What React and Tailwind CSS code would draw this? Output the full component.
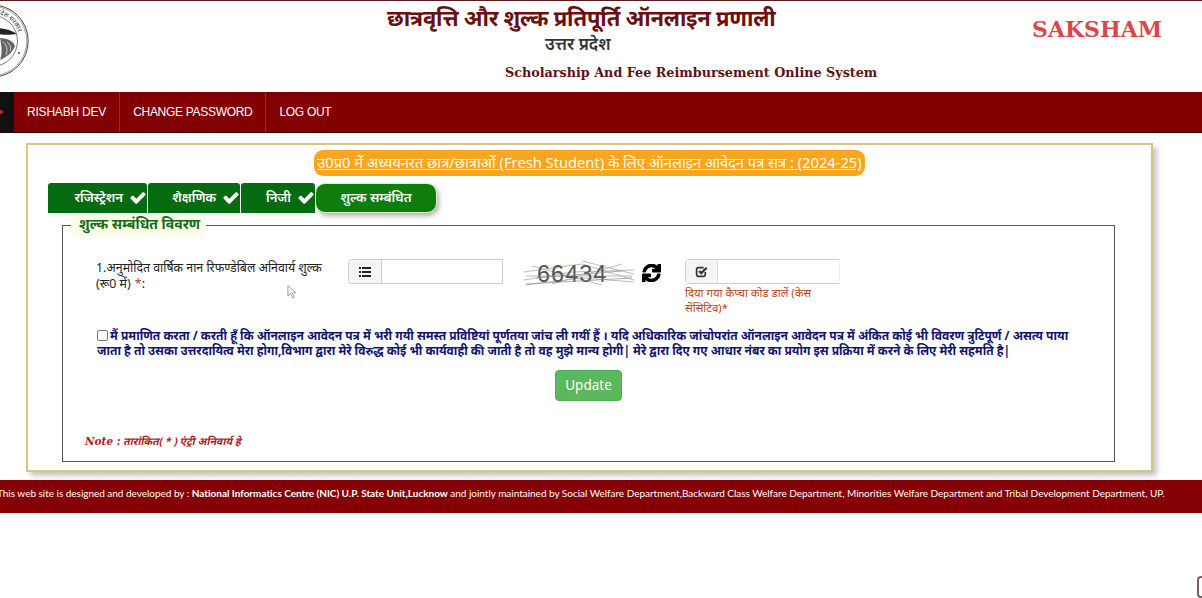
import React from "react";
import { FaCheck, FaSync } from "react-icons/fa";

const deva = "font-['Noto_Sans','Noto_Sans_Devanagari','Lohit_Devanagari','Open_Sans',sans-serif]";

function Seal() {
  return (
    <svg viewBox="0 0 74 74" className="w-[74px] h-[74px] shrink-0 -ml-[45px] mt-[3px]" fill="none">
      <circle cx="37" cy="37" r="36.2" stroke="#333" strokeWidth="0.9" />
      <circle cx="37" cy="37" r="34.8" stroke="#444" strokeWidth="0.5" />
      <circle cx="37" cy="37" r="25.5" stroke="#444" strokeWidth="0.7" />
      <path id="sealArc" d="M37 9.5 A27.5 27.5 0 0 1 64 42" />
      <text fontSize="6.6" fill="#333" fontFamily="'Noto Sans', sans-serif">
        <textPath href="#sealArc" startOffset="4">प्रदेश सरकार</textPath>
      </text>
      <path d="M37 24 C46 24 55 25 62 30 C55 31 50 31 44 30 C40 30 38 29 37 28 Z" fill="#222" />
      <path d="M45 34 C53 34 59 38 60 42 C58 48 52 53 45 56 C47 50 47 42 45 34 Z" fill="#666" />
      <path d="M48 38 C52 41 53 46 51 51 M52 38 C56 41 56 44 55 47" stroke="#eee" strokeWidth="0.8" />
      <circle cx="64" cy="49" r="0.9" fill="#333" />
    </svg>
  );
}

function Captcha() {
  return (
    <svg viewBox="0 0 114 30" className="w-[114px] h-[30px] shrink-0" fill="none">
      <g stroke="#aaa" strokeWidth="0.8">
        <path d="M2 14 L60 6 L112 22" />
        <path d="M2 22 L50 14 L112 12" />
        <path d="M3 27 L60 20 L112 24" />
        <path d="M10 8 L80 27" />
        <path d="M30 26 L100 6" />
        <path d="M4 18 L110 18" />
        <path d="M60 3 L112 16" />
      </g>
      <text x="15" y="24" fill="#555" fontSize="23.5" fontFamily="'Liberation Sans', sans-serif" letterSpacing="1">66434</text>
      <g stroke="#8a8a8a" strokeWidth="0.7">
        <path d="M14 20 L100 13" />
        <path d="M4 26 L110 20" />
      </g>
    </svg>
  );
}

function Tab({ w, mr, label }) {
  return (
    <div className={`${w} ${mr} bg-[#056b10] rounded-t-[3px] flex items-center justify-end gap-[6px]`}>
      {label}
      <FaCheck className="w-[18px] h-[14px] stroke-[40]" stroke="currentColor" />
    </div>
  );
}

export default function App() {
  return (
    <div className={`w-[1202px] h-[598px] overflow-hidden bg-white relative ${deva}`}>
      <header className="h-[92px] border-t border-[#5b1a1a] flex">
        <Seal />
        <div className="ml-[358px] w-[500px] shrink-0">
          <h1 className="text-[22px] leading-[32px] font-bold text-[#6b1010] tracking-[-0.27px] whitespace-nowrap">छात्रवृत्ति और शुल्क प्रतिपूर्ति ऑनलाइन प्रणाली</h1>
          <div className="text-[17px] leading-[22px] font-semibold text-[#333] ml-[158px]">उत्तर प्रदेश</div>
          <div className="font-['DejaVu_Serif',serif] font-bold text-[12.75px] leading-[18px] text-[#5e1212] ml-[118px] mt-[9px] whitespace-nowrap">Scholarship And Fee Reimbursement Online System</div>
        </div>
        <div className="ml-[145px] mt-[14px] font-['DejaVu_Serif',serif] font-bold text-[22px] leading-[28px] text-[#d9474b]">SAKSHAM</div>
      </header>

      <nav className="h-[41px] bg-[#830000] border-b border-[#2a0000] flex font-['Liberation_Sans',sans-serif] text-[12px] text-white">
        <div className="w-[14px] bg-[#111] flex items-center">
          <span className="w-[3px] h-[4px] bg-[#c22] rounded-r-full" />
        </div>
        <a className="px-[13px] flex items-center border-r border-[#9c2a2a] tracking-[-0.2px]">RISHABH DEV</a>
        <a className="px-[13px] flex items-center border-r border-[#9c2a2a] tracking-[-0.3px]">CHANGE PASSWORD</a>
        <a className="px-[13px] flex items-center tracking-[-0.3px]">LOG OUT</a>
      </nav>

      <main className="ml-[26px] mt-[10px] w-[1127px] h-[329px] border-2 border-[#d8c483] bg-white shadow-[4px_4px_5px_rgba(0,0,0,0.22)] flex flex-col">
        <div className="flex justify-center mt-[5px]">
          <div className="h-[26px] w-[551px] rounded-[9px] bg-[#f8a61f] text-[#fffbe8] text-[14.7px] leading-[25px] underline text-center whitespace-nowrap">
            उ0प्र0 में अध्ययनरत छात्र/छात्राओं (Fresh Student) के लिए ऑनलाइन आवेदन पत्र सत्र : (2024-25)
          </div>
        </div>

        <div className="flex mt-[7px] ml-[20px] h-[30px] text-white text-[13px] font-semibold">
          <Tab w="w-[99px]" mr="mr-[1px]" label="रजिस्ट्रेशन" />
          <Tab w="w-[92px]" mr="mr-[1px]" label="शैक्षणिक" />
          <Tab w="w-[74px]" mr="" label="निजी" />
          <div className="w-[122px] bg-[#0f7d0c] rounded-[10px] flex items-center justify-center shadow-[2px_3px_5px_rgba(0,0,0,0.3)] border border-[#d8f0d0]">शुल्क सम्बंधित</div>
        </div>

        <fieldset className="ml-[34px] w-[1053px] h-[249px] border border-[#555] px-[23px] min-w-0">
          <legend className="ml-[-15px] px-[8px] h-[24px] w-[135px] bg-[#fcfde9] rounded-[8px] text-[#176b12] text-[14px] leading-[22px] font-bold whitespace-nowrap">शुल्क सम्बंधित विवरण</legend>
          <div className="flex mt-[22px] ml-[10px]">
            <label className="w-[252px] pr-[12px] shrink-0 text-[12.35px] leading-[16px] text-[#222] pt-[1px]">
              1.अनुमोदित वार्षिक नान रिफण्डेबिल अनिवार्य शुल्क (रू0 में) <span className="text-[#c0392b] ml-[1px]">*</span>:
            </label>
            <div className="w-[155px] h-[25px] flex border border-[#ccc] rounded-l-[4px] shrink-0">
              <span className="w-[33px] bg-[#f5f5f5] border-r border-[#ccc] flex items-center justify-center rounded-l-[4px]">
                <svg viewBox="0 0 12 10" className="w-[12px] h-[10px]" fill="#222">
                  <path d="M0 0h2v2H0zM3 0h9v2H3zM0 4h2v2H0zM3 4h9v2H3zM0 8h2v2H0zM3 8h9v2H3z" />
                </svg>
              </span>
            </div>
            <div className="ml-[19px] -mt-[1px]"><Captcha /></div>
            <FaSync className="w-[19px] h-[18px] text-black ml-[6px] mt-[5px] stroke-[30]" stroke="currentColor" />
            <div className="ml-[24px] w-[155px] shrink-0">
              <div className="h-[25px] flex border border-[#ccc] border-r-[#eee] rounded-l-[4px]">
                <span className="w-[32px] bg-[#f5f5f5] border-r border-[#ddd] flex items-center justify-center">
                  <svg viewBox="0 0 12 12" className="w-[13px] h-[13px]" fill="none" stroke="#333" strokeWidth="1.6">
                    <path d="M9.5 6.5 V9 A1.5 1.5 0 0 1 8 10.5 H3 A1.5 1.5 0 0 1 1.5 9 V4 A1.5 1.5 0 0 1 3 2.5 H8" />
                    <path d="M3.8 5.5 L5.8 7.5 L10.8 2.5" strokeWidth="2" />
                  </svg>
                </span>
              </div>
              <div className="text-[11.4px] leading-[15px] text-[#b4481e] mt-[1px]">दिया गया कैप्चा कोड डालें (केस सेंसिटिव)*</div>
            </div>
          </div>

          <p className="mt-[13px] ml-[11px] w-[990px] text-[12px] leading-[15px] font-bold text-[#14146e]">
            <span className="inline-block w-[11px] h-[11px] border border-[#777] rounded-[2px] align-[-1px] mr-[2px]" />
            मैं प्रमाणित करता / करती हूँ कि ऑनलाइन आवेदन पत्र में भरी गयी समस्त प्रविष्टियां पूर्णतया जांच ली गयीं हैं । यदि अधिकारिक जांचोपरांत ऑनलाइन आवेदन पत्र में अंकित कोई भी विवरण त्रुटिपूर्ण / असत्य पाया जाता है तो उसका उत्तरदायित्व मेरा होगा,विभाग द्वारा मेरे विरुद्ध कोई भी कार्यवाही की जाती है तो वह मुझे मान्य होगी| मेरे द्वारा दिए गए आधार नंबर का प्रयोग इस प्रक्रिया में करने के लिए मेरी सहमति है|
          </p>

          <div className="flex justify-center mt-[12px]">
            <button className="w-[67px] h-[31px] rounded-[4px] bg-[#5cb85c] border border-[#4cae4c] text-white text-[13.5px]">Update</button>
          </div>

          <div className="mt-[33px] -ml-[1px] text-[10.5px] leading-[14px] font-bold text-[#b01e1e]">
            <span className="font-['DejaVu_Serif',serif] italic">Note : </span>
            <span className="inline-block -skew-x-12">तारांकित( * ) एंट्री अनिवार्य हे</span>
          </div>
        </fieldset>
      </main>

      <footer className="mt-[8px] h-[33px] bg-[#850004] text-white text-[10px] tracking-[-0.023px] font-['Lato',sans-serif] leading-[26px] whitespace-nowrap -ml-[3px] w-[1205px]">
        This web site is designed and developed by : <b>National Informatics Centre (NIC) U.P. State Unit,Lucknow</b> and jointly maintained by Social Welfare Department,Backward Class Welfare Department, Minorities Welfare Department and Tribal Development Department, UP.
      </footer>

      <svg viewBox="0 0 14 22" className="absolute left-[287px] top-[285px] w-[10px] h-[15px]" fill="#fff" stroke="#777" strokeWidth="1"><path d="M1 1 L1 16 L5 12.5 L8 19 L10.5 18 L7.5 11.5 L12.5 11 Z" /></svg>
      <div className="absolute left-[1197px] top-[576px] w-[12px] h-[22px] rounded-[4px] border-2 border-[#7a6060]" />
    </div>
  );
}
